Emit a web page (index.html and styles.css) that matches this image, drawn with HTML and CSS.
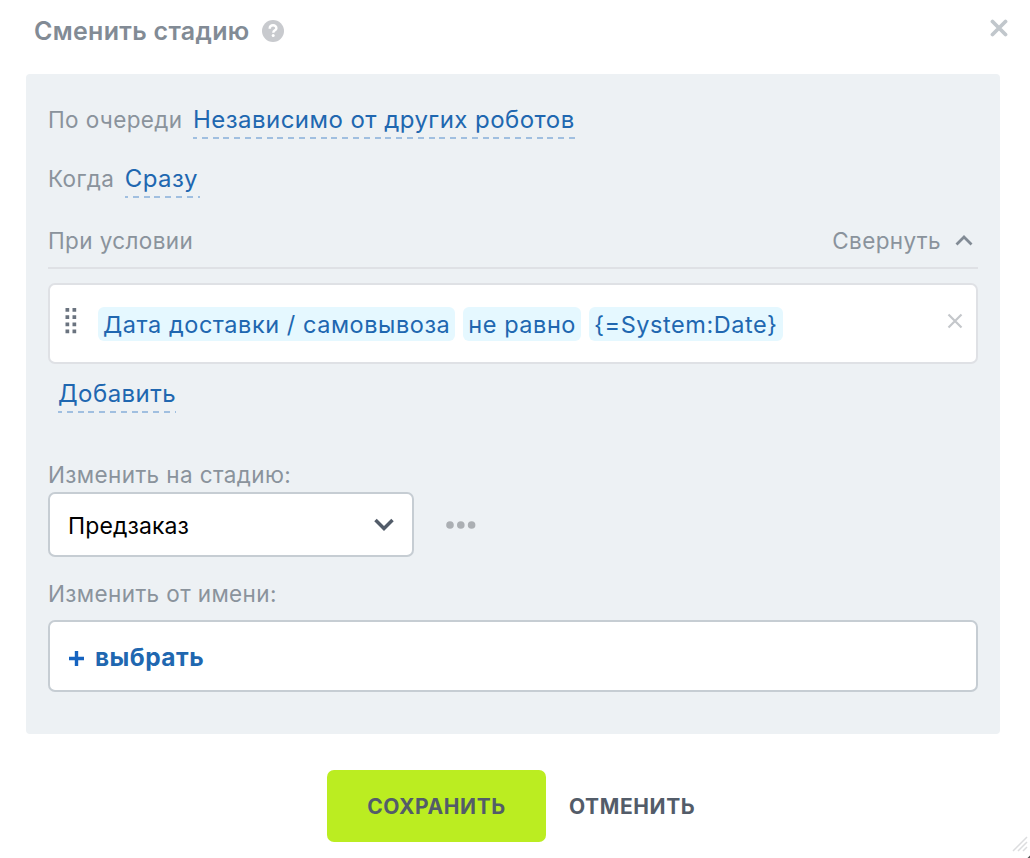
FILE: index.html
```html
<!DOCTYPE html>
<html lang="ru">
<head>
<meta charset="utf-8">
<title>Сменить стадию</title>
<link rel="stylesheet" href="styles.css">
</head>
<body>
<div class="dialog">
  <header class="header">
    <h1 class="title">Сменить стадию</h1>
    <svg class="help" width="22" height="22" viewBox="0 0 22 22"><circle cx="11" cy="11" r="11" fill="#c8cace"/><path d="M7.7 8.7C7.700 6.500 9.100 5.300 11.100 5.300S14.400 6.400 14.400 8.200C14.400 10.400 11.300 10.300 11.300 12.700" fill="none" stroke="#fff" stroke-width="2.400"/><circle cx="11.200" cy="15.600" r="1.500" fill="#fff"/></svg>
    <svg class="close" width="18" height="18" viewBox="0 0 18 18"><path d="M2.5 2.5 15.5 15.5M15.5 2.5 2.5 15.5" stroke="#c1c7cc" stroke-width="3.800" stroke-linecap="round"/></svg>
  </header>
  <main class="panel">
    <div class="row row-queue"><span class="label queue-label">По очереди</span><a class="link queue-link">Независимо от других роботов</a></div>
    <div class="row row-when"><span class="label when-label">Когда</span><a class="link when-link">Сразу</a></div>
    <div class="row row-condition"><span class="label condition-label">При условии</span><span class="label collapse">Свернуть</span><svg class="chevron-up" width="18" height="12" viewBox="0 0 18 12"><path d="M1.500 9.500 9 2 16.500 9.500" fill="none" stroke="#828b95" stroke-width="2.800"/></svg></div>
    <div class="condition">
      <svg class="grip" width="12" height="28" viewBox="0 0 12 28" fill="#6a737f"><path d="M.5 1h3.700v3.700H.5zM7.500 1h3.700v3.700h-3.700zM.5 8.300h3.700V12H.5zM7.500 8.300h3.700V12h-3.700zM.5 15.600h3.700v3.700H.5zM7.500 15.600h3.700v3.700h-3.700zM.5 22.600h3.700v3.700H.5zM7.500 22.600h3.700v3.700h-3.700z"/></svg>
      <span class="chip chip-field">Дата доставки / самовывоза</span>
      <span class="chip chip-operator">не равно</span>
      <span class="chip chip-value">{=System:Date}</span>
      <svg class="remove" width="16" height="16" viewBox="0 0 16 16"><path d="M1.500 1.500 14.500 14.500M14.500 1.500 1.500 14.500" stroke="#c4c7cb" stroke-width="2.200"/></svg>
    </div>
    <div class="row row-add"><a class="link add-link">Добавить</a></div>
    <div class="label stage-label">Изменить на стадию:</div>
    <div class="stage">
      <div class="select"><span class="select-value">Предзаказ</span><svg width="20" height="14" viewBox="0 0 20 14"><path d="M1.500 2 10 10.500 18.500 2" fill="none" stroke="#525c69" stroke-width="3.500"/></svg></div>
      <svg class="dots" width="30" height="8" viewBox="0 0 30 8" fill="#abafb3"><circle cx="4" cy="4" r="3.800"/><circle cx="14.800" cy="4" r="3.800"/><circle cx="25.600" cy="4" r="3.800"/></svg>
    </div>
    <div class="label name-label">Изменить от имени:</div>
    <div class="picker"><svg class="plus" width="15" height="15" viewBox="0 0 15 15"><path d="M0 7.500H15M7.500 0V15" stroke="#1563c0" stroke-width="3.400"/></svg><span class="picker-text">выбрать</span></div>
  </main>
  <footer class="footer">
    <button class="button save">СОХРАНИТЬ</button>
    <button class="button cancel">ОТМЕНИТЬ</button>
  </footer>
  <svg class="resize" width="18" height="22" viewBox="0 0 18 22"><path d="M1 15 15 1M6 15 15 6M11 15 15 11" stroke="#dcdddf" stroke-width="1.500"/><path d="M18 19.500V22H15.500Z" fill="#555"/></svg>
</div>
</body>
</html>
```
FILE: styles.css
```css
* { box-sizing: border-box; }
body { margin: 0; background: #fff; font-family: Inter, "Open Sans", sans-serif; }
svg { display: block; flex: none; }
.dialog { position: relative; width: 1030px; height: 858px; padding: 0 30px 0 26px; overflow: hidden; white-space: nowrap; }
.header { display: flex; align-items: center; height: 74px; padding: 0 0 12px 8px; margin-right: -8px; }
.title { margin: 0 0 1px; color: #828b95; font-size: 25px; font-weight: 600; line-height: 30px; letter-spacing: 0.3px; }
.help { margin-left: 12px; }
.close { margin: 0 0 6px auto; }
.panel { height: 660px; padding: 22px; border-radius: 4px; background: #edf1f4; }
.row { display: flex; align-items: center; }
.label { color: #8a939c; font-size: 22.5px; line-height: 28px; letter-spacing: 0.38px; }
.link { color: #2067b0; font-size: 24px; line-height: 31px; letter-spacing: 0.46px; padding-bottom: 4px; background: repeating-linear-gradient(90deg, #a0bfe0 0 6px, transparent 6px 10.8px) -2px 100% / calc(100% + 2px) 2px no-repeat; }
.row-queue { height: 48px; }
.row-when { height: 72px; padding-bottom: 2px; }
.queue-link, .when-link { margin: 3px 0 0 10.5px; }
.when-link { padding-right: 2px; background-position-x: -3px; background-size: calc(100% + 3px) 2px; }
.row-condition { height: 53px; padding-bottom: 2px; border-bottom: 2px solid #dfe1e5; }
.collapse { margin-left: auto; }
.chevron-up { margin: 0 5px 0 14px; }
.condition { display: flex; align-items: center; height: 81px; margin-top: 14px; padding: 0 13px 0 15px; border: 2px solid #dfe1e5; border-radius: 7px; background: #fff; }
.grip { margin: 0 21px 5px 0; }
.chip { height: 34px; margin-right: 8px; padding: 0 5px; border-radius: 6px; background: #e5f8ff; color: #2067b0; font-size: 23.5px; line-height: 35px; letter-spacing: 0.55px; }
.remove { margin: 0 0 6px auto; }
.row-add { height: 61px; padding: 1px 0 0 10px; }
.stage-label { margin-top: 36px; }
.stage { display: flex; align-items: center; gap: 32px; margin-top: 3px; }
.select { display: flex; align-items: center; justify-content: space-between; width: 366px; height: 65px; padding: 0 18px; border: 2px solid #c6cdd3; border-radius: 7px; background: #fff; }
.select-value { padding-top: 2px; font-size: 23px; letter-spacing: 0.1px; color: #000; }
.name-label { margin-top: 23px; }
.picker { display: flex; align-items: center; height: 72px; margin-top: 12px; padding: 2px 19px 0; gap: 11px; border: 2px solid #c6cdd3; border-radius: 7px; background: #fff; }
.plus { margin-top: 3px; }
.picker-text { color: #2067b0; font-size: 24.5px; font-weight: 700; letter-spacing: 0.45px; }
.footer { display: flex; padding: 36px 0 0 301px; }
.button { height: 72px; padding: 1px 0 0; border: 0; background: none; color: #535c69; font: 700 21px/71px Inter, "Open Sans", sans-serif; letter-spacing: 0.6px; }
.save { width: 219px; border-radius: 7px; background: #bbed21; }
.cancel { margin-left: 23px; }
.resize { position: absolute; right: 0; bottom: 0; }
```
